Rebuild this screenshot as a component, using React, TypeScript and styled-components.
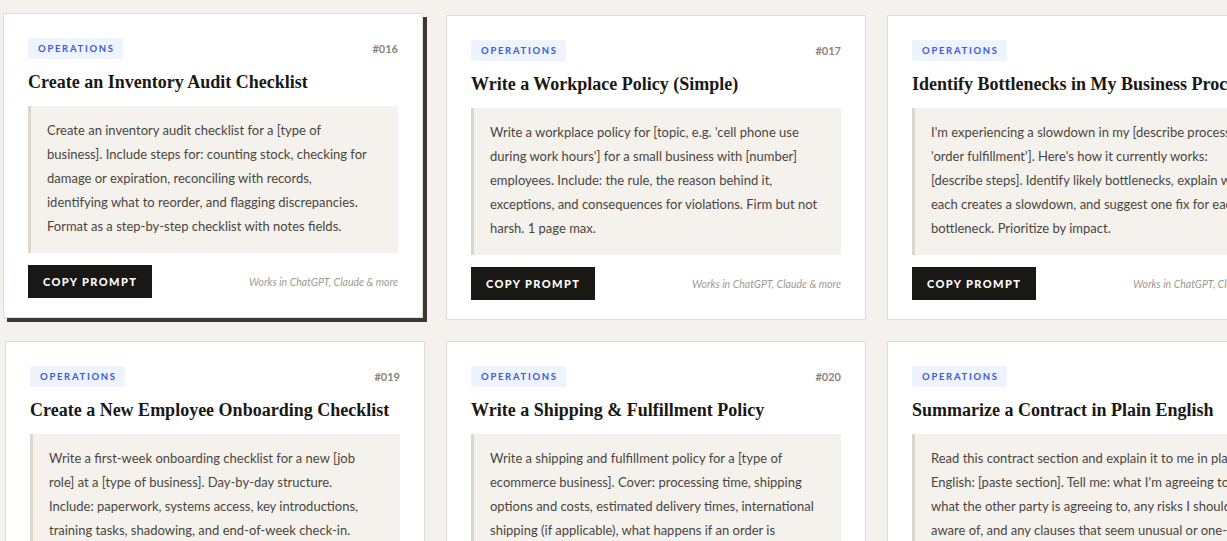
import styled, { createGlobalStyle, css } from "styled-components";

const GlobalStyle = createGlobalStyle`
  html, body {
    margin: 0;
    padding: 0;
    background: #f5f2ed;
    overflow: hidden;
  }
  * {
    box-sizing: border-box;
  }
`;

const Page = styled.div`
  padding: 15px 0 0 5px;
  width: 1400px;
`;

const Grid = styled.div`
  display: grid;
  grid-template-columns: repeat(3, 420px);
  gap: 21px;
`;

const raised = css`
  transform: translate(-2px, -2px);
  box-shadow: 4px 4px 0 #3d3a35;
`;

const Card = styled.article<{ $raised?: boolean }>`
  display: flex;
  flex-direction: column;
  background: #ffffff;
  border: 1px solid #e2ddd4;
  padding: 24px 24px 19px;
  transition: transform 0.2s, box-shadow 0.2s;
  ${(p) => p.$raised && raised}

  &:hover {
    ${raised}
  }
`;

const CardHead = styled.div`
  display: flex;
  align-items: center;
  justify-content: space-between;
  height: 21px;
  margin-bottom: 11px;
`;

const Badge = styled.span`
  background: #eef4ff;
  color: #3b5bdb;
  font-family: "Lato", sans-serif;
  font-size: 9.5px;
  font-weight: 700;
  letter-spacing: 1.7px;
  text-transform: uppercase;
  padding: 5px 8px 5px 10px;
  border-radius: 2px;
  line-height: 11px;
`;

const Num = styled.span`
  font-family: "Lato", sans-serif;
  font-size: 11px;
  font-weight: 700;
  color: #8a837a;
`;

const Title = styled.h3`
  margin: 0 0 12px;
  font-family: "Liberation Serif", serif;
  font-size: 18px;
  font-weight: 700;
  line-height: 24px;
  color: #1a1814;
  white-space: nowrap;
`;

const Prompt = styled.p`
  flex: 1;
  margin: 0 0 12px;
  background: #f5f2ed;
  border-left: 3px solid #ddd6cc;
  padding: 12px 23px 15px 16px;
  font-family: "Lato", sans-serif;
  font-size: 13px;
  line-height: 24px;
  color: #4a4540;
`;

const Foot = styled.div`
  display: flex;
  align-items: center;
  justify-content: space-between;
`;

const CopyButton = styled.button`
  background: #1a1814;
  color: #ffffff;
  border: none;
  height: 33px;
  padding: 0 15px;
  font-family: "Lato", sans-serif;
  font-size: 11px;
  font-weight: 900;
  letter-spacing: 1.4px;
  text-transform: uppercase;
  cursor: pointer;
`;

const Works = styled.span`
  font-family: "Lato", sans-serif;
  font-style: italic;
  font-size: 10.5px;
  color: #a09a91;
`;

type PromptItem = {
  id: string;
  category: string;
  title: string;
  text: string;
};

const prompts: PromptItem[] = [
  {
    id: "#016",
    category: "Operations",
    title: "Create an Inventory Audit Checklist",
    text: "Create an inventory audit checklist for a [type of business]. Include steps for: counting stock, checking for damage or expiration, reconciling with records, identifying what to reorder, and flagging discrepancies. Format as a step-by-step checklist with notes fields.",
  },
  {
    id: "#017",
    category: "Operations",
    title: "Write a Workplace Policy (Simple)",
    text: "Write a workplace policy for [topic, e.g. 'cell phone use during work hours'] for a small business with [number] employees. Include: the rule, the reason behind it, exceptions, and consequences for violations. Firm but not harsh. 1 page max.",
  },
  {
    id: "#018",
    category: "Operations",
    title: "Identify Bottlenecks in My Business Process",
    text: "I'm experiencing a slowdown in my [describe process, e.g. 'order fulfillment']. Here's how it currently works: [describe steps]. Identify likely bottlenecks, explain why each creates a slowdown, and suggest one fix for each bottleneck. Prioritize by impact.",
  },
  {
    id: "#019",
    category: "Operations",
    title: "Create a New Employee Onboarding Checklist",
    text: "Write a first-week onboarding checklist for a new [job role] at a [type of business]. Day-by-day structure. Include: paperwork, systems access, key introductions, training tasks, shadowing, and end-of-week check-in. Keep it practical and easy to follow.",
  },
  {
    id: "#020",
    category: "Operations",
    title: "Write a Shipping & Fulfillment Policy",
    text: "Write a shipping and fulfillment policy for a [type of ecommerce business]. Cover: processing time, shipping options and costs, estimated delivery times, international shipping (if applicable), what happens if an order is delayed or lost. Clear and customer-friendly.",
  },
  {
    id: "#021",
    category: "Operations",
    title: "Summarize a Contract in Plain English",
    text: "Read this contract section and explain it to me in plain English: [paste section]. Tell me: what I'm agreeing to, what the other party is agreeing to, any risks I should be aware of, and any clauses that seem unusual or one-sided.",
  },
];

const PromptCard = ({ item, raised }: { item: PromptItem; raised?: boolean }) => (
  <Card $raised={raised}>
    <CardHead>
      <Badge>{item.category}</Badge>
      <Num>{item.id}</Num>
    </CardHead>
    <Title>{item.title}</Title>
    <Prompt>{item.text}</Prompt>
    <Foot>
      <CopyButton>Copy Prompt</CopyButton>
      <Works>Works in ChatGPT, Claude &amp; more</Works>
    </Foot>
  </Card>
);

const App = () => (
  <>
    <GlobalStyle />
    <Page>
      <Grid>
        {prompts.map((p, i) => (
          <PromptCard key={p.id} item={p} raised={i === 0} />
        ))}
      </Grid>
    </Page>
  </>
);

export default App;
